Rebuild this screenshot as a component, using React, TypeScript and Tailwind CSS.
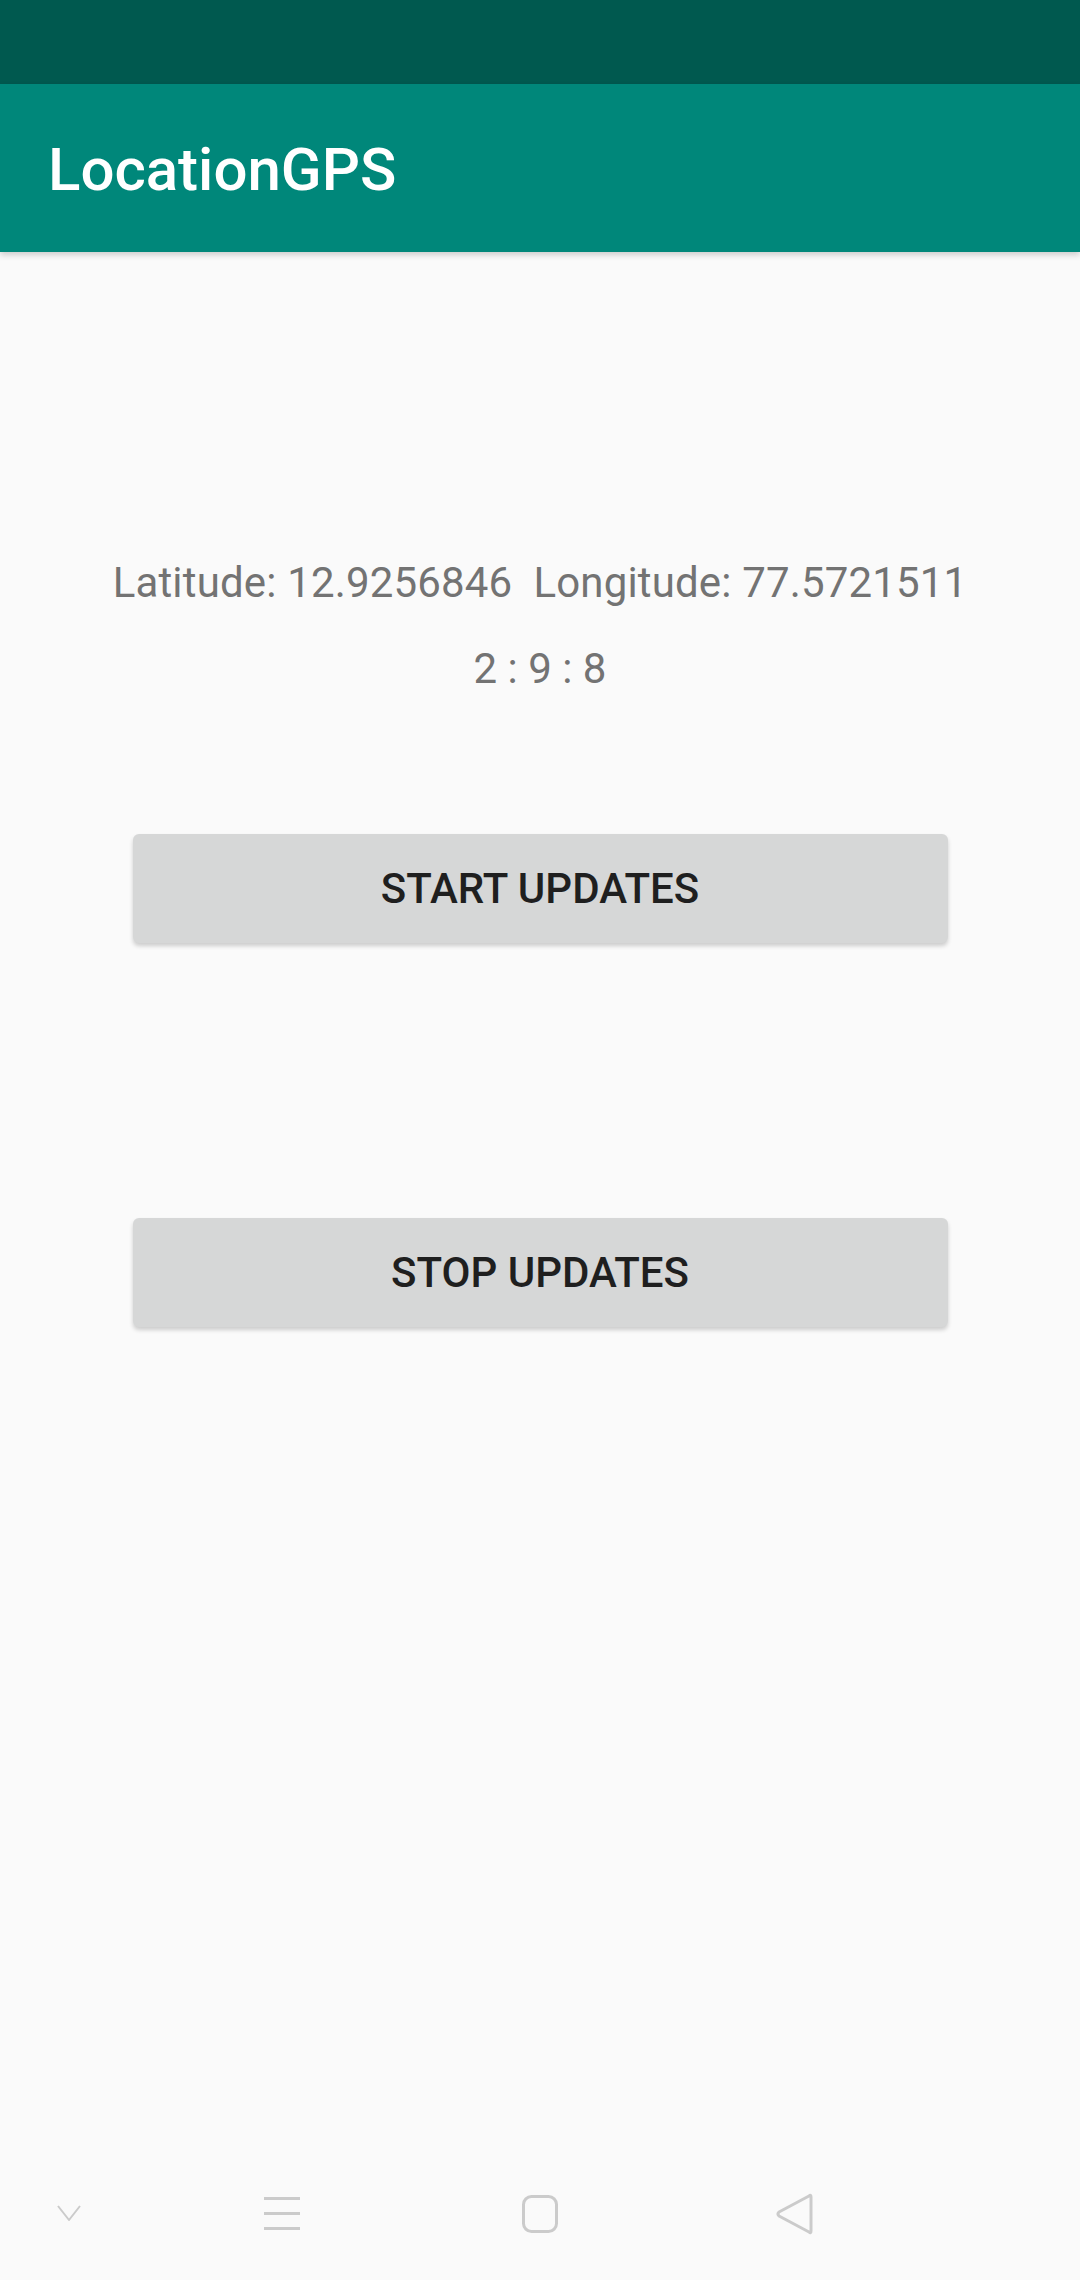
import React from "react";

export default function App() {
  return (
    <div className="w-[1080px] h-[2280px] bg-[#fafafa] flex flex-col font-['Roboto',sans-serif] overflow-hidden">
      <div className="h-[84px] bg-[#00594f] shrink-0" />
      <div className="h-[168px] bg-[#00877a] flex items-center pl-[48px] pt-[4px] shrink-0 relative z-10 shadow-[0_3px_6px_rgba(0,0,0,0.18)]">
        <span className="text-white text-[60px] font-medium leading-[70px]">LocationGPS</span>
      </div>
      <div className="flex flex-col items-center pt-[306px]">
        <p className="text-[42px] leading-[49px] text-[#737373] whitespace-pre tracking-[0.16px]">
          {"Latitude: 12.9256846  Longitude: 77.5721511"}
        </p>
        <p className="mt-[37px] text-[42px] leading-[49px] text-[#737373] whitespace-pre">
          {"2 : 9 : 8"}
        </p>
        <button className="mt-[141px] w-[815px] h-[109px] bg-[#d6d7d7] rounded-[6px] shadow-[0_3px_4px_rgba(0,0,0,0.18)] text-[42px] font-medium text-[#1f1f1f] flex items-center justify-center">
          START UPDATES
        </button>
        <button className="mt-[275px] w-[815px] h-[109px] bg-[#d6d7d7] rounded-[6px] shadow-[0_3px_4px_rgba(0,0,0,0.18)] text-[42px] font-medium text-[#1f1f1f] flex items-center justify-center">
          STOP UPDATES
        </button>
      </div>
      <div className="mt-auto h-[132px] shrink-0 flex items-center pl-[57px]">
        <svg width="24" height="16" viewBox="0 0 24 16" className="mt-[-2px]">
          <polyline points="1,1 12,15 23,1" fill="none" stroke="#cbcbcb" strokeWidth="2" strokeLinejoin="round" />
        </svg>
        <svg width="36" height="34" viewBox="0 0 36 34" className="ml-[183px]">
          <rect x="0" y="0" width="36" height="3" fill="#cbcbcb" />
          <rect x="0" y="15" width="36" height="3" fill="#cbcbcb" />
          <rect x="0" y="30" width="36" height="3" fill="#cbcbcb" />
        </svg>
        <svg width="36" height="38" viewBox="0 0 36 38" className="ml-[222px]">
          <rect x="1.5" y="1.5" width="33" height="35" rx="8" fill="none" stroke="#cbcbcb" strokeWidth="3" />
        </svg>
        <svg width="38" height="42" viewBox="0 0 38 42" className="ml-[218px]">
          <path d="M35 4 Q35 1 33 3 L3 19 Q1 21 3 23 L33 39 Q35 41 35 38 Z" fill="none" stroke="#cbcbcb" strokeWidth="3" strokeLinejoin="round" />
        </svg>
      </div>
    </div>
  );
}
